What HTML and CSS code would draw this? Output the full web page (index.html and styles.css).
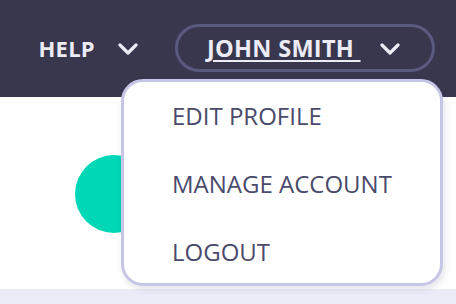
FILE: index.html
```html
<!DOCTYPE html>
<html>
<head>
<meta charset="utf-8">
<link rel="stylesheet" href="styles.css">
</head>
<body>
<header class="topbar">
  <button class="nav-link">
    <span class="nav-label">HELP</span>
    <svg class="chev" width="20" height="12" viewBox="0 0 20 12"><path d="M2 2 L10 10 L18 2" fill="none" stroke="currentColor" stroke-width="3.2" stroke-linecap="round" stroke-linejoin="round"/></svg>
  </button>
  <button class="user-pill">
    <span class="user-name">JOHN SMITH&nbsp;</span>
    <svg class="chev" width="20" height="12" viewBox="0 0 20 12"><path d="M2 2 L10 10 L18 2" fill="none" stroke="currentColor" stroke-width="3.2" stroke-linecap="round" stroke-linejoin="round"/></svg>
  </button>
  <nav class="menu">
    <a class="menu-item">EDIT PROFILE</a>
    <a class="menu-item">MANAGE ACCOUNT</a>
    <a class="menu-item">LOGOUT</a>
  </nav>
</header>
<main class="content">
  <div class="avatar"></div>
</main>
<div class="strip"></div>
</body>
</html>
```
FILE: styles.css
```css
* { box-sizing: border-box; }
html, body { margin: 0; padding: 0; }
body {
  width: 456px;
  height: 304px;
  overflow: hidden;
  background: #ffffff;
  font-family: "Open Sans", "Lato", sans-serif;
  position: relative;
}
.topbar {
  position: relative;
  height: 97px;
  background: #38374e;
  display: flex;
  align-items: center;
  justify-content: flex-end;
  padding-right: 21px;
  padding-bottom: 1px;
}
button {
  font-family: inherit;
  background: none;
  border: none;
  padding: 0;
  cursor: pointer;
  color: #ecebf6;
}
.nav-link {
  display: flex;
  align-items: center;
  gap: 23px;
  margin-right: 37px;
}
.nav-label {
  font-weight: 700;
  font-size: 22px;
  letter-spacing: 0.3px;
}
.chev { display: block; margin-top: 1px; }
.user-pill {
  display: flex;
  align-items: center;
  width: 260px;
  height: 48px;
  border: 3px solid #5a5980;
  border-radius: 24px;
  padding-left: 29px;
  gap: 19px;
}
.user-name {
  font-weight: 700;
  font-size: 23.5px;
  letter-spacing: 0.3px;
  text-decoration: underline;
  text-decoration-thickness: 2px;
  text-underline-offset: 3px;
  white-space: pre;
}
.menu {
  position: absolute;
  left: 121px;
  top: 79px;
  width: 322px;
  height: 207px;
  background: #ffffff;
  border: 3px solid #c6c5e6;
  border-radius: 22px;
  box-shadow: 2px 4px 6px rgba(60, 60, 100, 0.12);
  display: flex;
  flex-direction: column;
  gap: 30px;
  padding: 15px 0 0 48px;
  z-index: 2;
}
.menu-item {
  font-size: 24px;
  color: #4a4a6b;
  line-height: 38px;
  flex-shrink: 0;
}
.content {
  height: 192px;
  padding: 58px 0 0 75px;
}
.avatar {
  width: 78px;
  height: 78px;
  border-radius: 50%;
  background: #00d7b7;
}
.strip {
  height: 15px;
  background: #ececf8;
}
```
